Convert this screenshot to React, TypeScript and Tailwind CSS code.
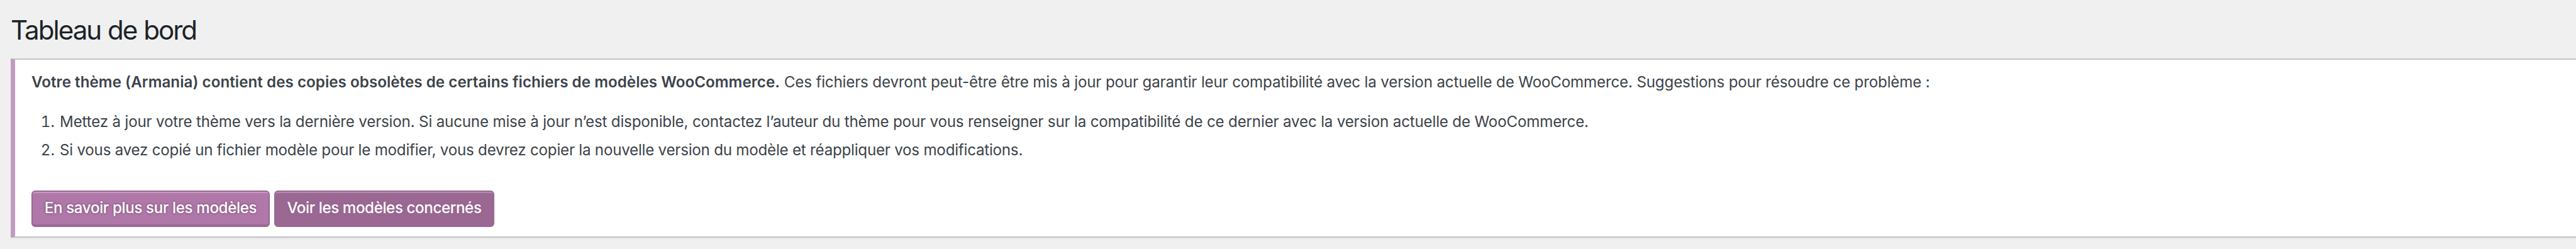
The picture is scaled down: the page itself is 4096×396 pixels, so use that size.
import { clsx } from 'clsx'

const steps = [
  {
    text: 'Mettez à jour votre thème vers la dernière version. Si aucune mise à jour n’est disponible, contactez l’auteur du thème pour vous renseigner sur la compatibilité de ce dernier avec la version actuelle de WooCommerce.',
    className: 'tracking-[-0.182px]',
  },
  {
    text: 'Si vous avez copié un fichier modèle pour le modifier, vous devrez copier la nouvelle version du modèle et réappliquer vos modifications.',
    className: 'tracking-[-0.23px]',
  },
]

const actions = [
  {
    label: 'En savoir plus sur les modèles',
    className: 'w-[379px] bg-[#b078a9] tracking-[-0.36px]',
  },
  {
    label: 'Voir les modèles concernés',
    className: 'w-[350px] bg-[#9a6893] tracking-[-0.4px]',
  },
]

function App() {
  return (
    <div className="h-[396px] w-full overflow-hidden bg-[#f0f0f0] pl-[17px] font-['Inter',sans-serif] text-[24.16px] text-[#3c434a]">
      <h1 className="h-[93px] pt-[21px] text-[42.2px] leading-[54px] tracking-[-2.05px] whitespace-nowrap text-[#1d2327] [word-spacing:1px]">
        <span>Tableau de bord</span>
      </h1>
      <div className="h-[285px] border-y-2 border-l-[7px] border-y-[#c3c4c7] border-l-[#c29bc2] bg-white pl-[26px] shadow-[0_2px_2px_rgba(0,0,0,0.04)]">
        <p className="pt-[18px] leading-[36px] whitespace-nowrap">
          <strong className="font-semibold tracking-[0.04px]">
            Votre thème (Armania) contient des copies obsolètes de certains fichiers de modèles WooCommerce.
          </strong>{' '}
          <span className="tracking-[-0.17px]">
            Ces fichiers devront peut-être être mis à jour pour garantir leur compatibilité avec la version actuelle de
            WooCommerce. Suggestions pour résoudre ce problème :
          </span>
        </p>
        <ol className="mt-[27px] whitespace-nowrap">
          {steps.map((step, i) => (
            <li key={step.text} className="flex h-[44.5px] leading-[36px]">
              <span className="w-[45px] pr-[8px] text-right tabular-nums">{i + 1}.</span>
              <span className={step.className}>{step.text}</span>
            </li>
          ))}
        </ol>
        <div className="mt-[38px] flex gap-[7px]">
          {actions.map((action) => (
            <button
              key={action.label}
              type="button"
              className={clsx(
                'h-[56px] rounded-[6px] border-2 border-[#9a6893] text-center leading-[52px] font-medium whitespace-nowrap text-white',
                'shadow-[inset_0_2px_0_rgba(255,255,255,0.25),0_2px_0_#9a6893]',
                '[text-shadow:0_-2px_2px_#9a6893,2px_0_2px_#9a6893,0_2px_2px_#9a6893,-2px_0_2px_#9a6893]',
                action.className,
              )}
            >
              <span>{action.label}</span>
            </button>
          ))}
        </div>
      </div>
    </div>
  )
}

export default App
